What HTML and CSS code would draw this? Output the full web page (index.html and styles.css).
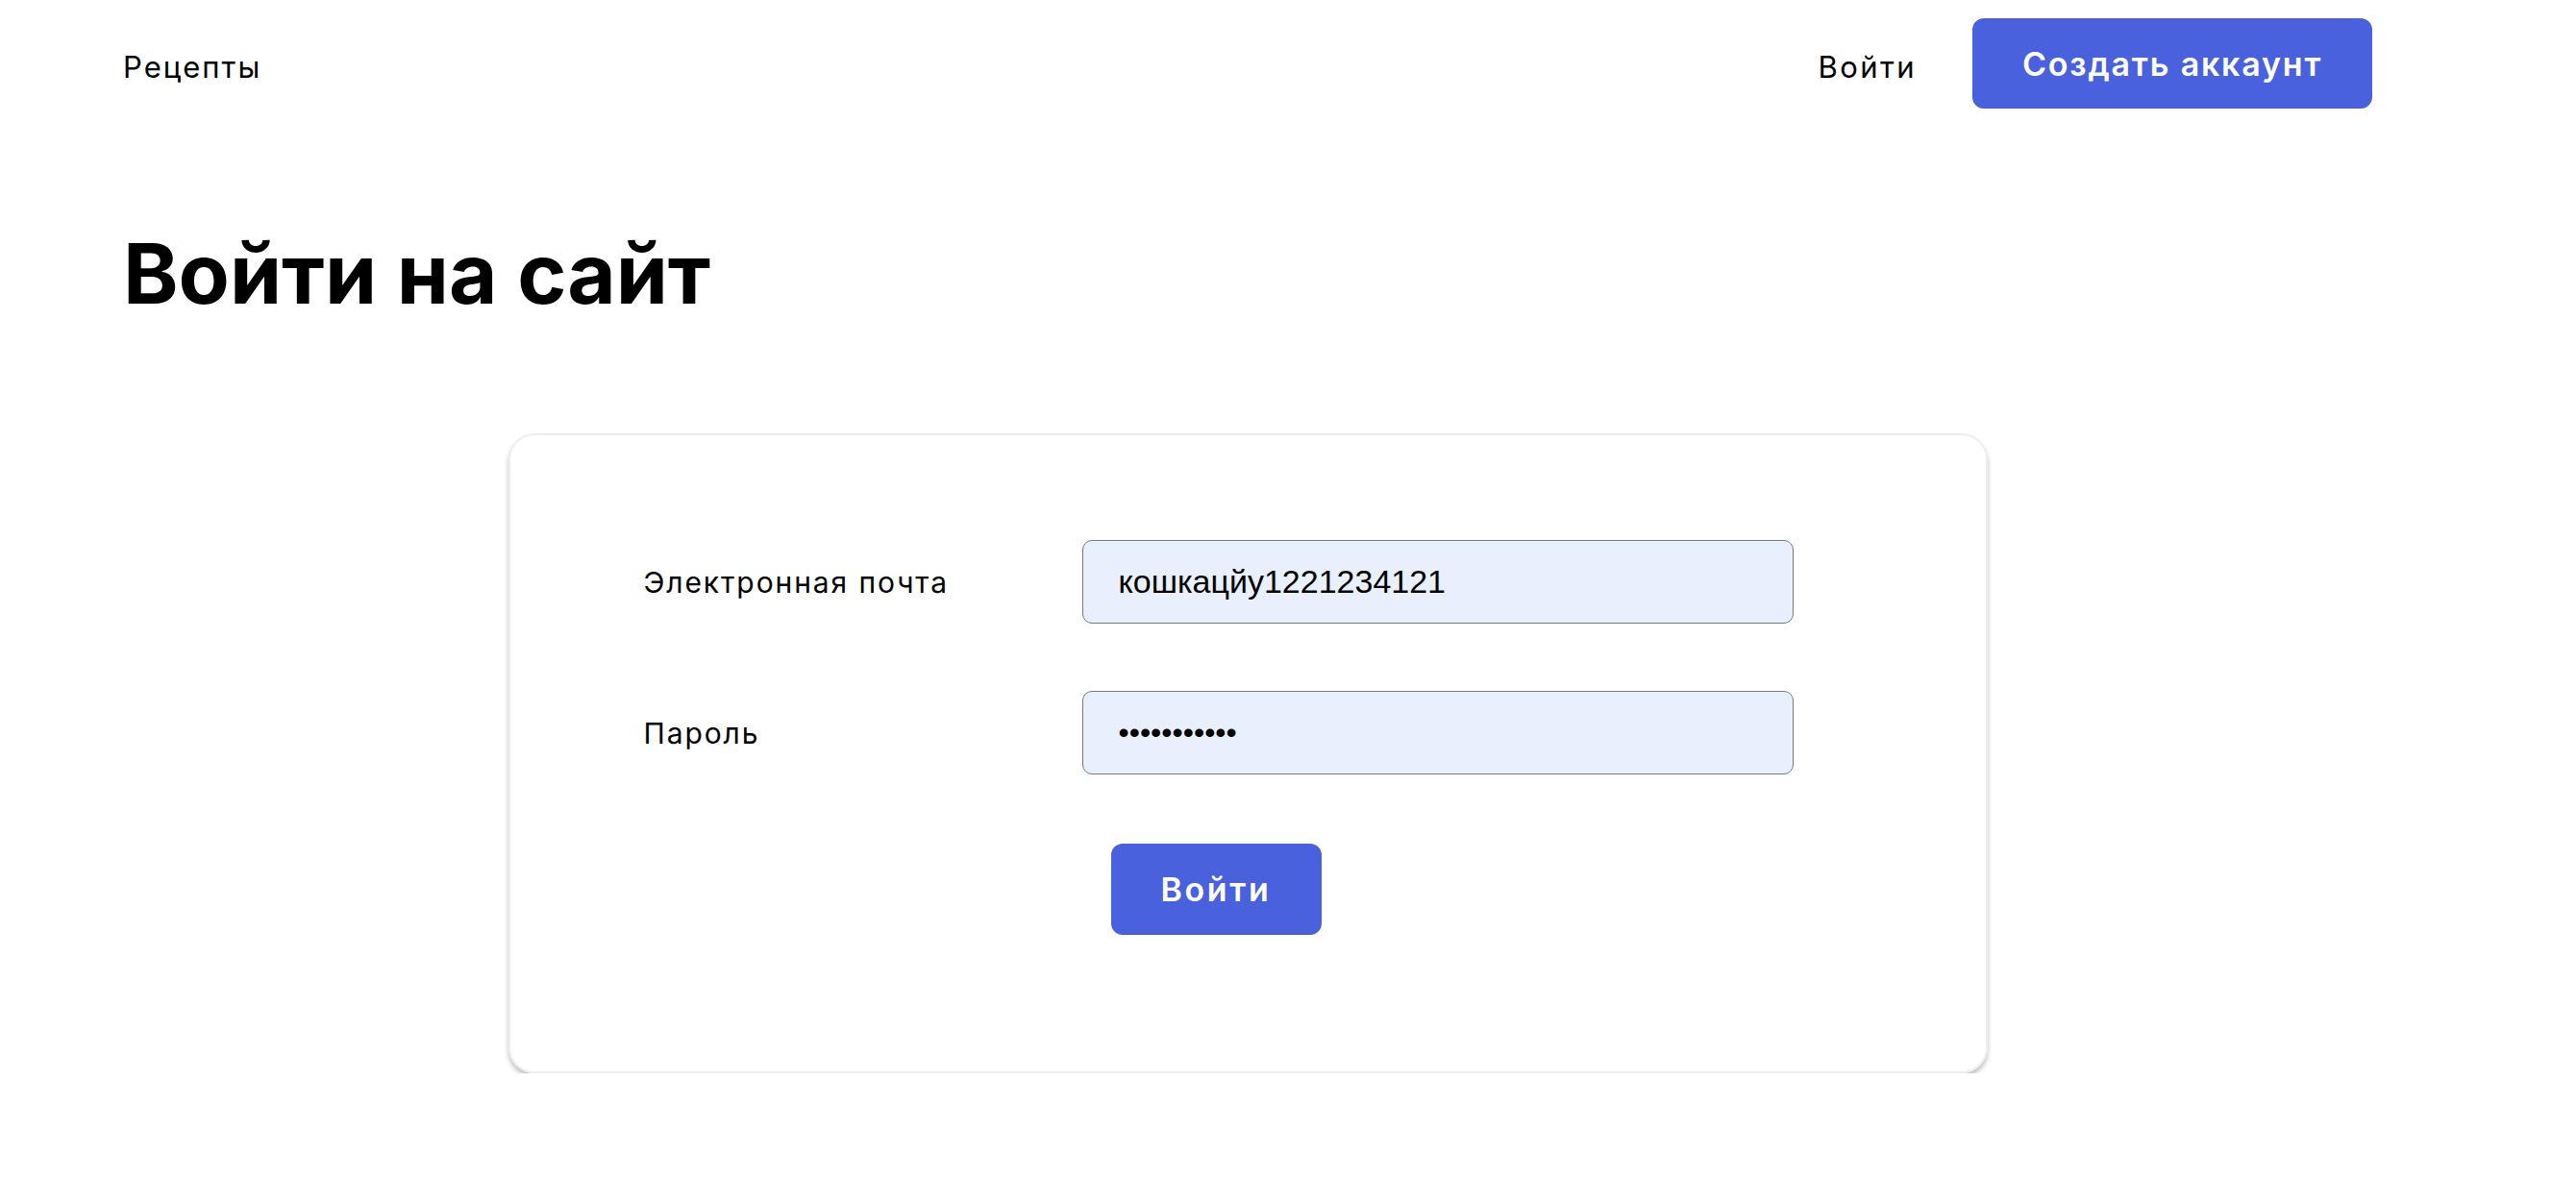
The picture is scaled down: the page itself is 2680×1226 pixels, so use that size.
FILE: index.html
```html
<!DOCTYPE html>
<html lang="ru">
<head>
    <meta charset="UTF-8">
    <meta name="viewport" content="width=device-width, initial-scale=1.0">
    <title>Войти на сайт</title>
    <link rel="stylesheet" href="styles.css">
</head>
<body>
    <header class="header">
        <a class="header__logo" href="#">Рецепты</a>
        <nav class="header__menu">
            <a class="header__link" href="#">Войти</a>
            <a class="btn btn--header" href="#">Создать аккаунт</a>
        </nav>
    </header>

    <main class="main">
        <h1 class="main__title">Войти на сайт</h1>

        <div class="card">
            <form class="form">
                <div class="form__row">
                    <label class="form__label" for="email">Электронная почта</label>
                    <input class="form__input" type="text" id="email" value="кошкацйу1221234121">
                </div>
                <div class="form__row">
                    <label class="form__label" for="password">Пароль</label>
                    <input class="form__input form__input--password" type="password" id="password" value="12345678901">
                </div>
                <div class="form__actions">
                    <button class="btn btn--submit" type="button">Войти</button>
                </div>
            </form>
        </div>
    </main>
</body>
</html>
```

FILE: styles.css
```css
body {
    margin: 0;
    font-family: Inter, 'Noto Sans', sans-serif;
    color: #000;
    background: #fff;
}
a {
    color: inherit;
    text-decoration: none;
}
.header {
    display: flex;
    justify-content: space-between;
    align-items: center;
    padding: 19px 212px 0 128px;
    height: 94px;
}
.header__logo {
    font-size: 31px;
    letter-spacing: 2px;
    padding-top: 6px;
}
.header__menu {
    display: flex;
    align-items: center;
    gap: 58px;
}
.header__link {
    font-size: 31px;
    letter-spacing: 2.4px;
    padding-top: 6px;
}
.btn {
    display: inline-flex;
    align-items: center;
    justify-content: center;
    background-color: #4a61dd;
    color: #fff;
    border: none;
    border-radius: 12px;
    font-family: inherit;
    font-weight: 600;
    cursor: pointer;
}
.btn--header {
    width: 416px;
    height: 94px;
    font-size: 34px;
    letter-spacing: 1.8px;
}
.main {
    padding: 0 212px 0 128px;
}
.main__title {
    margin: 128px 0 0 0;
    font-size: 87px;
    font-weight: 700;
    line-height: 1;
}
.card {
    width: 1539px;
    box-sizing: border-box;
    margin: 123px auto 0;
    padding: 109px 139px 142px;
    border: 2px solid #eee;
    border-radius: 27px;
    box-shadow: 0 4px 5px rgba(0,0,0,0.25);
}
.form__row {
    display: flex;
    align-items: center;
    margin-bottom: 70px;
}
.form__label {
    width: 456px;
    font-size: 30px;
    letter-spacing: 1.9px;
}
.form__input {
    width: 740px;
    height: 87px;
    box-sizing: border-box;
    padding: 0 37px;
    border: 1.5px solid #7a7a7a;
    border-radius: 10px;
    background-color: #e8f0fe;
    font-family: 'Liberation Sans', Arial, sans-serif;
    font-size: 34px;
    color: #000;
}
.form__input--password {
    font-size: 32px;
}
.form__actions {
    padding-left: 486px;
    margin-top: 72px;
}
.btn--submit {
    width: 219px;
    height: 95px;
    font-size: 34px;
    letter-spacing: 2.6px;
}
```
